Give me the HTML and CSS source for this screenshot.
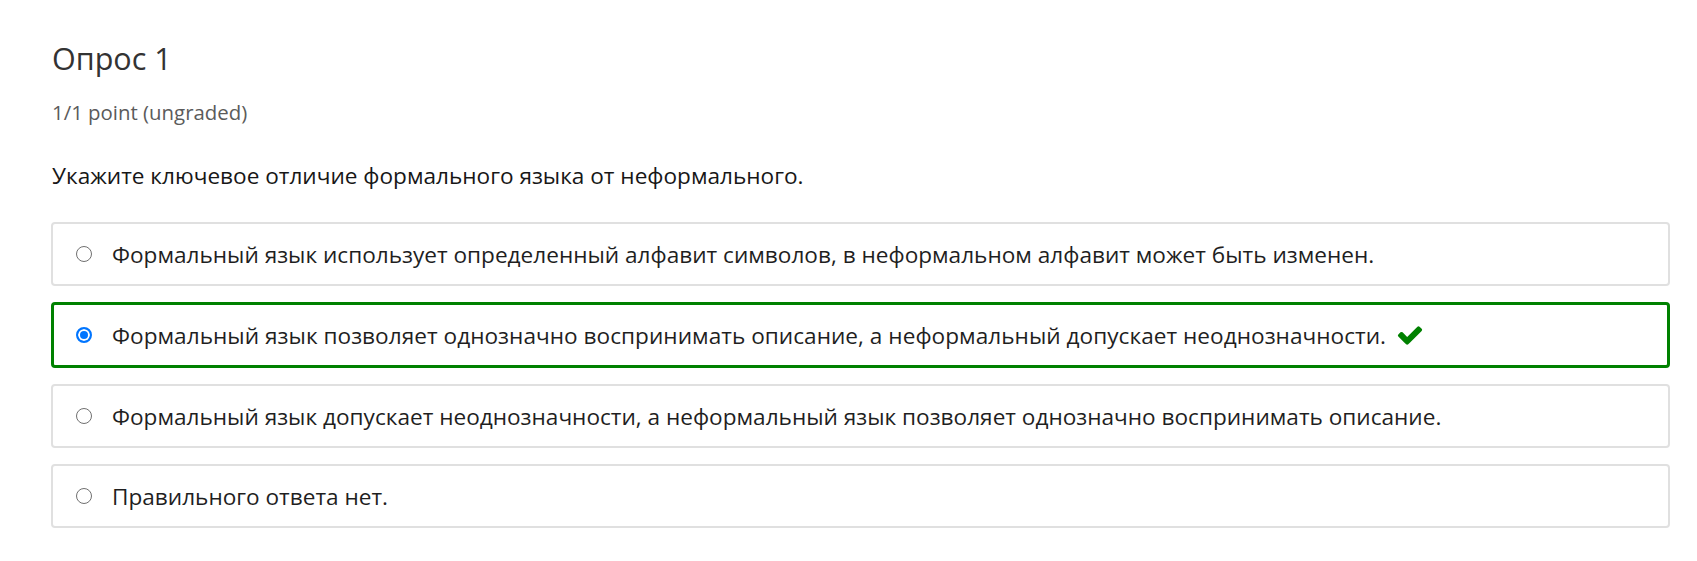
FILE: index.html
```html
<!DOCTYPE html>
<html lang="ru">
<head>
<meta charset="utf-8">
<title>Опрос 1</title>
<link rel="stylesheet" href="styles.css">
</head>
<body>
<div class="problem">
  <h2 class="problem-title">Опрос 1</h2>
  <div class="problem-progress">1/1 point (ungraded)</div>
  <p class="question">Укажите ключевое отличие формального языка от неформального.</p>
  <div class="choices">
    <label class="choice">
      <input type="radio" name="q1" class="radio">
      <span class="choice-text">Формальный язык использует определенный алфавит символов, в неформальном алфавит может быть изменен.</span>
    </label>
    <label class="choice choice-correct">
      <input type="radio" name="q1" class="radio" checked>
      <span class="choice-text">Формальный язык позволяет однозначно воспринимать описание, а неформальный допускает неоднозначности.</span>
      <svg class="check" viewBox="0 0 1792 1792" width="28" height="28" aria-hidden="true"><path fill="currentColor" d="M1671 566q0 40-28 68l-724 724-136 136q-28 28-68 28t-68-28l-136-136-362-362q-28-28-28-68t28-68l136-136q28-28 68-28t68 28l294 295 656-657q28-28 68-28t68 28l136 136q28 28 28 68z"/></svg>
    </label>
    <label class="choice">
      <input type="radio" name="q1" class="radio">
      <span class="choice-text">Формальный язык допускает неоднозначности, а неформальный язык позволяет однозначно воспринимать описание.</span>
    </label>
    <label class="choice">
      <input type="radio" name="q1" class="radio">
      <span class="choice-text">Правильного ответа нет.</span>
    </label>
  </div>
</div>
</body>
</html>
```
FILE: styles.css
```css
html, body {
  margin: 0;
  padding: 0;
  background: #ffffff;
}
body {
  font-family: "Open Sans", "Noto Sans", sans-serif;
  color: #1f1f1f;
}
.problem {
  padding: 36px 27px 30px 51px;
}
.problem-title {
  margin: 0 0 20px 1px;
  font-size: 30.5px;
  font-weight: 400;
  line-height: 44px;
  color: #333333;
}
.problem-progress {
  margin: 0 0 37px 1px;
  font-size: 20.4px;
  line-height: 24px;
  color: #5b5b5b;
}
.question {
  margin: 0 0 31px 1px;
  font-size: 22.6px;
  line-height: 30px;
  color: #171717;
}
.choices {
  display: flex;
  flex-direction: column;
  gap: 16px;
}
.choice {
  display: flex;
  align-items: center;
  height: 64px;
  box-sizing: border-box;
  padding: 0 0 0 23px;
  border: 2px solid #e0e0e0;
  border-radius: 4px;
  font-size: 22.6px;
  color: #1f1f1f;
}
.choice-correct {
  height: 66px;
  border: 3px solid #008100;
  padding-left: 22px;
}
.choice-correct .choice-text {
  letter-spacing: 0.03px;
}
.radio {
  appearance: none;
  -webkit-appearance: none;
  box-sizing: border-box;
  width: 16px;
  height: 16px;
  margin: 0 20px 0 0;
  border: 1.7px solid #707070;
  border-radius: 50%;
  background: #ffffff;
  flex: none;
}
.radio:checked {
  border: 2px solid #0075ff;
  background: #0075ff;
  box-shadow: inset 0 0 0 2px #ffffff;
}
.check {
  margin-left: 10px;
  color: #008100;
  flex: none;
}
```
